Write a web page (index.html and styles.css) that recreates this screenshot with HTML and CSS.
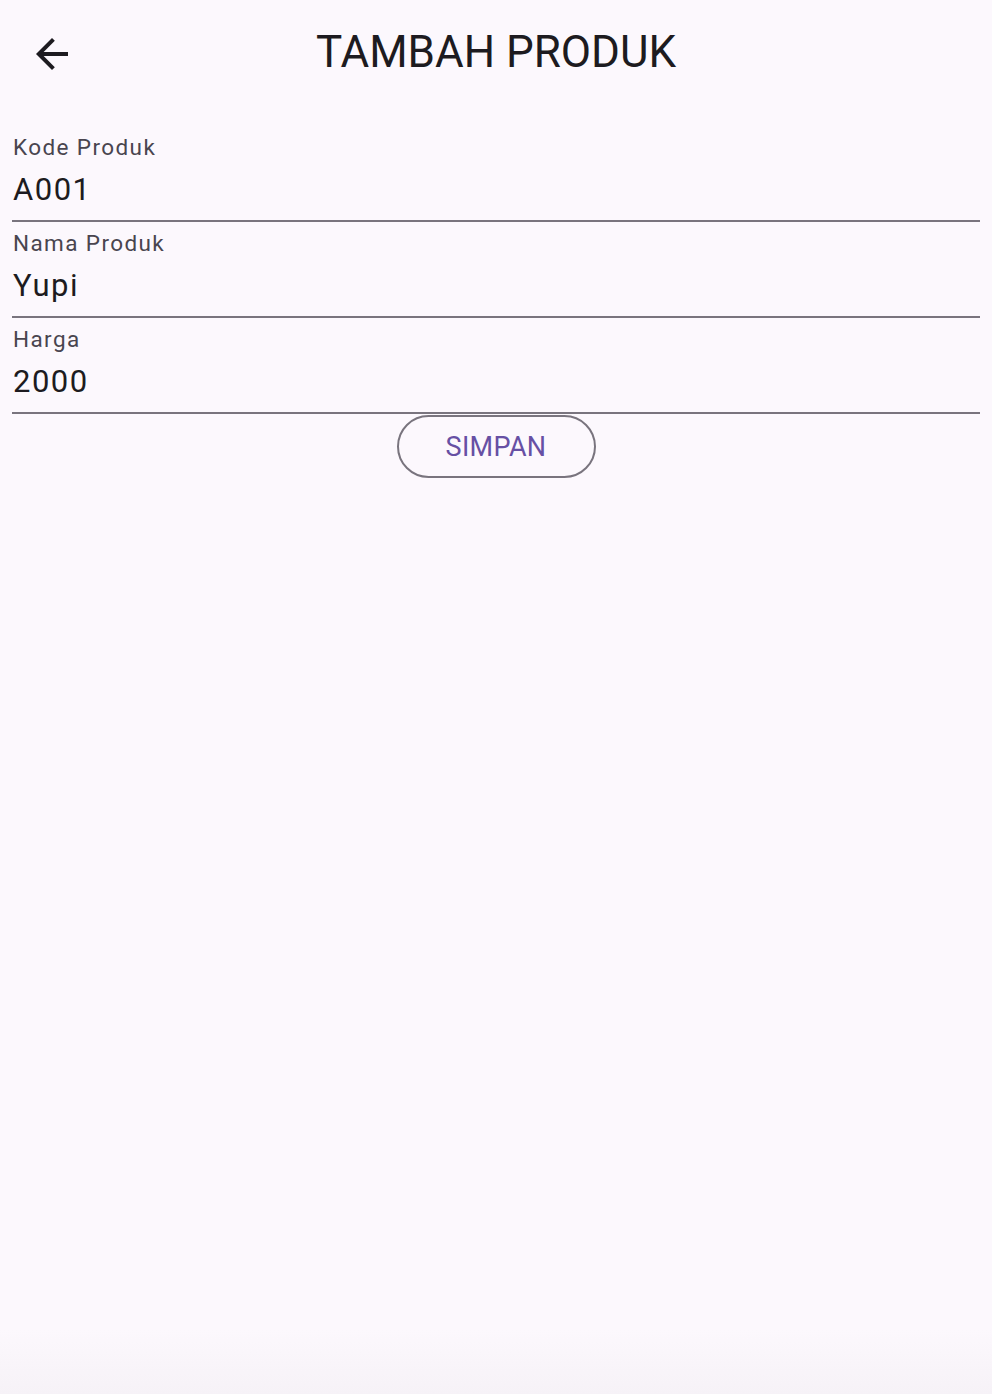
FILE: index.html
```html
<!DOCTYPE html>
<html lang="id">
<head>
<meta charset="utf-8">
<title>Tambah Produk</title>
<link rel="stylesheet" href="styles.css">
</head>
<body>
<div class="app">
  <header class="appbar">
    <button class="back" aria-label="Kembali">
      <svg viewBox="0 0 24 24" width="48" height="48"><path d="M20 11H7.83l5.59-5.59L12 4l-8 8 8 8 1.41-1.41L7.83 13H20v-2z" fill="#1d1b20"/></svg>
    </button>
    <h1 class="title">TAMBAH PRODUK</h1>
  </header>
  <form class="form">
    <div class="field">
      <label class="label">Kode Produk</label>
      <div class="value">A001</div>
    </div>
    <div class="field">
      <label class="label">Nama Produk</label>
      <div class="value">Yupi</div>
    </div>
    <div class="field">
      <label class="label">Harga</label>
      <div class="value">2000</div>
    </div>
    <div class="actions">
      <button type="button" class="btn">SIMPAN</button>
    </div>
  </form>
</div>
</body>
</html>
```
FILE: styles.css
```css
html, body {
  margin: 0;
  padding: 0;
  height: 100%;
}
body {
  background: #fcf8fd;
  font-family: Roboto, "Noto Sans", sans-serif;
  color: #1d1b20;
}
.app {
  min-height: 1394px;
  background: linear-gradient(to bottom, #fcf8fd 0, #fcf8fd 1330px, #f6f2f7 1394px);
}
.appbar {
  position: relative;
  height: 106px;
  display: flex;
  align-items: center;
  justify-content: center;
}
.back {
  position: absolute;
  left: 28px;
  top: 30px;
  width: 48px;
  height: 48px;
  padding: 0;
  border: 0;
  background: none;
  display: flex;
}
.title {
  margin: 0;
  margin-top: -2px;
  font-weight: 400;
  font-size: 44px;
  letter-spacing: 0;
  line-height: 1;
}
.form {
  padding: 20px 12px 0;
  display: flex;
  flex-direction: column;
}
.field {
  height: 94px;
  border-bottom: 2px solid #79747e;
  display: flex;
  flex-direction: column;
}
.label {
  font-size: 22.5px;
  letter-spacing: 1.4px;
  color: #49454f;
  padding-left: 1px;
  line-height: 1;
  margin-top: 10px;
}
.value {
  font-size: 31px;
  letter-spacing: 1.5px;
  padding-left: 1px;
  line-height: 1;
  margin-top: 15px;
}
.actions {
  display: flex;
  justify-content: center;
  padding-top: 1px;
}
.btn {
  width: 199px;
  height: 63px;
  border: 2px solid #79747e;
  border-radius: 32px;
  background: transparent;
  color: #6750a4;
  font-family: Roboto, sans-serif;
  font-size: 27px;
  letter-spacing: 0.3px;
  font-weight: 400;
}
```
